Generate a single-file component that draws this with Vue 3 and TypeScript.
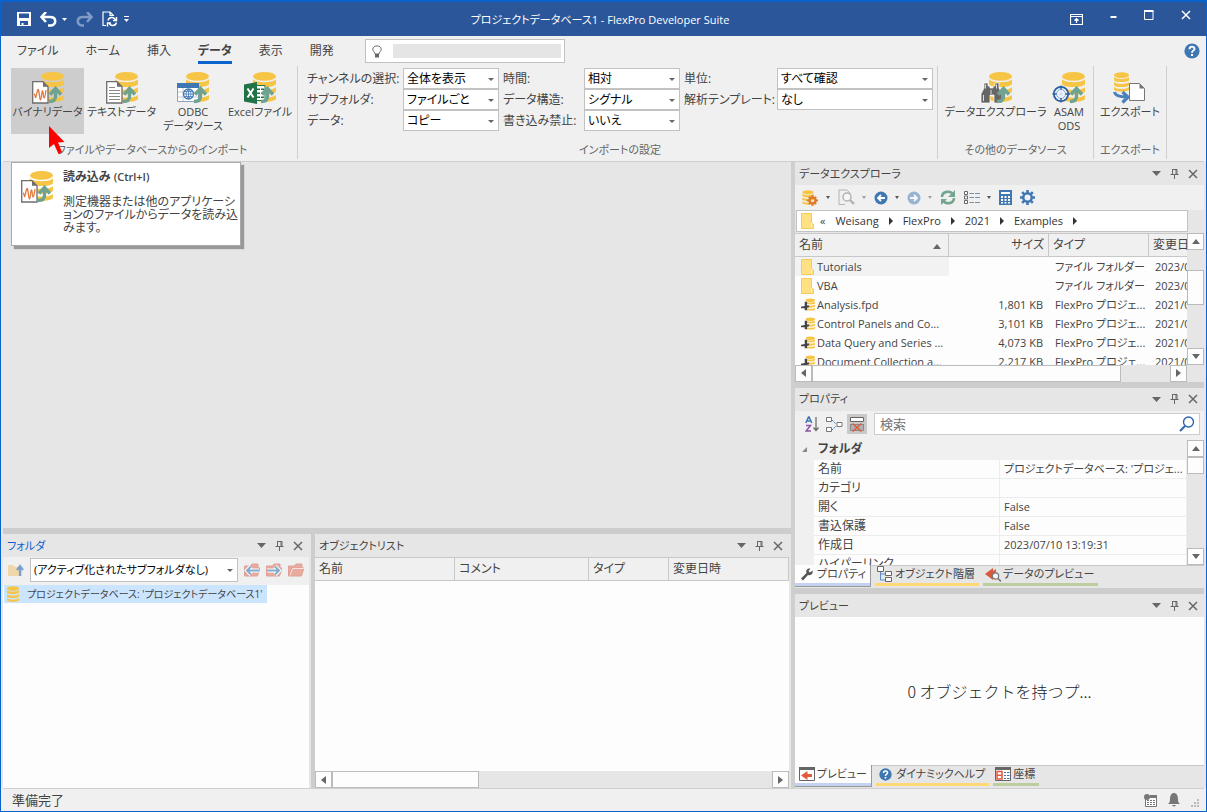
<script setup lang="ts">
import { ref } from 'vue'

interface RibbonButton { kind: string; lines: string[]; active?: boolean }
interface Setting { id: string; label: string; value: string }
interface FileRow { folder: boolean; name: string; size: string; type: string; date: string }
interface DockTab { icon: string; label: string; tone: string }

const menu = ['ファイル', 'ホーム', '挿入', 'データ', '表示', '開発']
const activeMenu = ref('データ')

const importButtons: RibbonButton[] = [
  { kind: 'wave', lines: ['バイナリデータ'], active: true },
  { kind: 'text', lines: ['テキストデータ'] },
  { kind: 'odbc', lines: ['ODBC', 'データソース'] },
  { kind: 'excel', lines: ['Excelファイル'] },
]
const sourceButtons: RibbonButton[] = [
  { kind: 'search', lines: ['データエクスプローラ'] },
  { kind: 'asam', lines: ['ASAM', 'ODS'] },
]
const exportButtons: RibbonButton[] = [{ kind: 'export', lines: ['エクスポート'] }]

const settings: Setting[][] = [
  [
    { id: 'channel', label: 'チャンネルの選択:', value: '全体を表示' },
    { id: 'subfolder', label: 'サブフォルダ:', value: 'ファイルごと' },
    { id: 'data', label: 'データ:', value: 'コピー' },
  ],
  [
    { id: 'time', label: '時間:', value: '相対' },
    { id: 'structure', label: 'データ構造:', value: 'シグナル' },
    { id: 'readonly', label: '書き込み禁止:', value: 'いいえ' },
  ],
  [
    { id: 'unit', label: '単位:', value: 'すべて確認' },
    { id: 'template', label: '解析テンプレート:', value: 'なし' },
  ],
]

const crumbs = ['Weisang', 'FlexPro', '2021', 'Examples']

const files: FileRow[] = [
  { folder: true, name: 'Tutorials', size: '', type: 'ファイル フォルダー', date: '2023/07/10' },
  { folder: true, name: 'VBA', size: '', type: 'ファイル フォルダー', date: '2023/07/10' },
  { folder: false, name: 'Analysis.fpd', size: '1,801 KB', type: 'FlexPro プロジェ...', date: '2021/09/02' },
  { folder: false, name: 'Control Panels and Co...', size: '3,101 KB', type: 'FlexPro プロジェ...', date: '2021/09/02' },
  { folder: false, name: 'Data Query and Series ...', size: '4,073 KB', type: 'FlexPro プロジェ...', date: '2021/09/02' },
  { folder: false, name: 'Document Collection a...', size: '2,217 KB', type: 'FlexPro プロジェ...', date: '2021/09/02' },
]

const properties: [string, string][] = [
  ['名前', "プロジェクトデータベース: 'プロジェ..."],
  ['カテゴリ', ''],
  ['開く', 'False'],
  ['書込保護', 'False'],
  ['作成日', '2023/07/10 13:19:31'],
  ['ハイパーリンク', ''],
]

const propertyTabs: DockTab[] = [
  { icon: 'wrench', label: 'プロパティ', tone: 'blue' },
  { icon: 'tree', label: 'オブジェクト階層', tone: 'yellow' },
  { icon: 'lens', label: 'データのプレビュー', tone: 'green' },
]
const previewTabs: DockTab[] = [
  { icon: 'preview', label: 'プレビュー', tone: 'blue' },
  { icon: 'help', label: 'ダイナミックヘルプ', tone: 'yellow' },
  { icon: 'coords', label: '座標', tone: 'green' },
]
const listColumns = ['名前', 'コメント', 'タイプ', '変更日時']
const query = ref('')
const command = ref('')
</script>

<template>
  <div class="window">
    <svg class="defs" aria-hidden="true">
      <symbol id="db" viewBox="0 0 24 32">
        <g fill="#f7c545">
          <ellipse cx="12" cy="5" rx="12" ry="4.6" />
          <path d="M0 8c3 4 21 4 24 0v5c-3 4-21 4-24 0z" />
          <path d="M0 16c3 4 21 4 24 0v5c-3 4-21 4-24 0z" />
          <path d="M0 24c3 4 21 4 24 0v4.500c-3 4-21 4-24 0z" />
        </g>
      </symbol>
      <symbol id="up-arrow" viewBox="0 0 14 18">
        <path d="M2 8.500 7.500 2.500 13 8.500M7.500 4v6.500q0 5-6.500 5" fill="none" stroke="#6fa391" stroke-width="3.400" />
      </symbol>
      <symbol id="sheet" viewBox="0 0 17 23">
        <path d="M.7.700h10.300l5 5v16.300H.7z" fill="#fff" stroke="#6e6e6e" stroke-width="1.300" />
        <path d="M11 .700v5h5z" fill="#6e6e6e" />
      </symbol>
      <symbol id="wave-db" viewBox="0 0 34 34">
        <use href="#db" x="10" y="1" width="23" height="32" />
        <use href="#sheet" x="1" y="11" width="17" height="23" />
        <path d="M3 24c1 0 1 2 1.500 3.500S6.500 17 7.500 20s1 10 2 10 1-9 2-9 .5 7 1.500 7 1.500-5 2-8" fill="none" stroke="#e2793d" stroke-width="1.300" />
        <use href="#up-arrow" x="17" y="16" width="14" height="18" />
      </symbol>
      <symbol id="caret" viewBox="0 0 9 5"><path d="M0 0h9L4.500 5z" fill="#666" /></symbol>
      <symbol id="pin" viewBox="0 0 9 10">
        <path d="M2 .5h5M2.500.500v5M6 .500v5M7 .500v5M.5 5.500h8M4.500 6v4" fill="none" stroke="#666" />
      </symbol>
      <symbol id="close" viewBox="0 0 10 10"><path d="m1 1 8 8M9 1 1 9" stroke="#666" stroke-width="1.500" /></symbol>
      <symbol id="folder" viewBox="0 0 14 16">
        <path d="M.5.500h10v10l2 .5v4.500H.5z" fill="#ffe083" stroke="#f3cd58" />
        <path d="M10.500 10v5" stroke="#fff1b8" />
      </symbol>
      <symbol id="project" viewBox="0 0 15 15">
        <use href="#db" x="5" y="0" width="10" height="14" />
        <path d="M4 4h2.500v4H9l-1 2.500H6.500V13H4v-2H0V9.500l4-1z" fill="#444" />
      </symbol>
      <symbol id="help" viewBox="0 0 16 16">
        <circle cx="8" cy="8" r="7.600" fill="#3f77b3" />
        <path d="M5.500 6.200c0-3.400 5-3.400 5-.3C10.500 7.700 8 7.500 8 9.800" fill="none" stroke="#fff" stroke-width="1.900" />
        <path d="M7 11h2v2H7z" fill="#fff" />
      </symbol>
    </svg>

    <header class="titlebar">
      <div class="quick">
        <button aria-label="保存"><svg width="14" height="14"><path d="M0 0h14v14H0z" fill="#fff" /><path d="M2 1.500h10v4.500H2zM3 9h8v4H6.500v-2h-2v2H3z" fill="#2b579a" /></svg></button>
        <button aria-label="元に戻す"><svg width="17" height="15"><path d="M6 0 1.500 5 6 10M2 5h8c7 0 6.500 8 1 8.500H8" fill="none" stroke="#fff" stroke-width="2.600" /></svg></button>
        <button class="tiny" aria-label="元に戻す履歴"><svg width="5" height="3"><path d="M0 0h5L2.500 3z" fill="#fff" /></svg></button>
        <button aria-label="やり直し"><svg width="17" height="15"><path d="m11 0 4.500 5L11 10M15 5H7C0 5 .5 13 6 13.500h2" fill="none" stroke="#7f9bc6" stroke-width="2.600" /></svg></button>
        <button aria-label="更新"><svg width="16" height="16"><path d="M4 14.500H1V1h7l3.500 3.500V5M8 1v3.500h3.500" fill="none" stroke="#fff" stroke-width="1.200" /><path d="M6 9.500c1-4 6-4 7.500-.5M14.500 11.500c-1 4-6 4-7.500.5M14.500 6v3.500H11M5.500 15.500V12H9" fill="none" stroke="#fff" stroke-width="1.400" /></svg></button>
        <button class="tiny" aria-label="カスタマイズ"><svg width="7" height="7"><path d="M1 .500h5" stroke="#fff" /><path d="M1 3h5L3.500 6z" fill="#fff" /></svg></button>
      </div>
      <h1>プロジェクトデータベース1 - FlexPro Developer Suite</h1>
      <div class="system">
        <button aria-label="リボン表示"><svg width="13" height="11"><path d="M.5.500h12v10H.5zM.5 2.500h12M6.500 9V4.500M4.500 6.500l2-2 2 2" fill="none" stroke="#fff" stroke-width="1.200" /></svg></button>
        <button aria-label="最小化"><svg width="7" height="11"><path d="M.5 7h6" stroke="#fff" stroke-width="2" /></svg></button>
        <button aria-label="最大化"><svg width="10" height="11"><path d="M.5 1h8.500v8.500H.5z" fill="none" stroke="#fff" /><path d="M0 1h9.500" stroke="#fff" stroke-width="2" /></svg></button>
        <button aria-label="閉じる"><svg width="10" height="10"><path d="m1 1 8 8M9 1 1 9" stroke="#fff" stroke-width="1.500" /></svg></button>
      </div>
    </header>

    <section class="ribbon">
      <nav class="menu">
        <button v-for="m in menu" :key="m" :class="{ current: m === activeMenu }" @click="activeMenu = m">{{ m }}</button>
        <label class="tell">
          <svg width="10" height="13"><path d="M3 9C3 7 .8 6.500.8 4.300.800-.2 9.200-.2 9.200 4.300 9.200 6.500 7 7 7 9z" fill="#fff" stroke="#666" /><path d="M3 9h4v3.500H3z" fill="#666" /></svg>
          <input v-model="command" aria-label="操作アシスト" />
        </label>
        <button class="help" aria-label="ヘルプ"><svg width="16" height="16"><use href="#help" /></svg></button>
      </nav>

      <div class="groups">
        <template v-for="(g, gi) in [importButtons, null, sourceButtons, exportButtons]" :key="gi">
          <section v-if="g" class="group" :class="'g' + gi">
            <div class="bigs">
              <button v-for="b in g" :key="b.kind" class="big" :class="[b.kind, { pressed: b.active }]">
                <svg width="34" height="34" viewBox="0 0 34 34">
                  <use v-if="b.kind === 'wave'" href="#wave-db" />
                  <template v-else-if="b.kind !== 'export'">
                    <use href="#db" x="10" y="1" width="23" height="32" />
                    <template v-if="b.kind === 'text'">
                      <use href="#sheet" x="1" y="11" width="17" height="23" />
                      <path d="M4 17.500h6M4 20.500h11M4 23.500h11M4 26.500h11M4 29.500h11" stroke="#888" />
                    </template>
                    <template v-if="b.kind === 'odbc'">
                      <path d="M1.500 13.500h21v18h-21z" fill="#fff" stroke="#8aa2bd" />
                      <path d="M1 13h22v5H1z" fill="#3f77b3" />
                      <path d="M2 22h20M2 27h20M7 18v13" stroke="#c5ccd5" />
                      <circle cx="12.500" cy="24" r="5" fill="#fff" stroke="#3f77b3" stroke-width="1.300" />
                      <path d="M7.500 24h10M12.500 19v10M8.500 21.500h8M8.500 26.500h8M12.500 19q-5 5 0 10q5-5 0-10" fill="none" stroke="#3f77b3" stroke-width=".8" />
                    </template>
                    <template v-if="b.kind === 'excel'">
                      <path d="M12 15.500h10v15H12z" fill="#fff" stroke="#217346" />
                      <path d="M14 18.500h3v1.500h-3zm4 0h3v1.500h-3zm-4 4h3v1.500h-3zm4 0h3v1.500h-3zm-4 4h3v1.500h-3zm4 0h3v1.500h-3z" fill="#217346" />
                      <path d="m1 14.500 13-2.500v22L1 31.500z" fill="#217346" />
                      <path d="m4.500 18.500 6 9M10.500 18.500l-6 9" stroke="#fff" stroke-width="2" />
                    </template>
                    <template v-if="b.kind === 'search'">
                      <path d="M5 13h4v3h2v2h3v-2h2v-3h4v5l3 6v9h-8v-8h-4v8H2v-9l3-6z" fill="#666" stroke="#fff" stroke-width=".7" />
                      <path d="M4.500 25v6M6.500 14.500v4M17.500 14.500v4M12 20v4" stroke="#ddd" />
                    </template>
                    <template v-if="b.kind === 'asam'">
                      <circle cx="9" cy="24" r="7.200" fill="#edf3fa" stroke="#2d5e9e" stroke-width="1.800" />
                      <circle cx="9" cy="24" r="4.500" fill="#fff" stroke="#82a9d2" stroke-width="1" />
                      <path d="M9 15.500v4M9 28v4.500M.5 24h4M13.500 24H18" stroke="#2d5e9e" stroke-width="1.400" />
                      <path d="M9 20v8M5 24h8M6 21l6 6M12 21l-6 6" stroke="#c7d8ea" stroke-width=".8" />
                    </template>
                    <use href="#up-arrow" x="17" y="16" width="14" height="18" />
                  </template>
                  <template v-else>
                    <use href="#db" x="1" y="2" width="15" height="20" />
                    <path d="M16.500 13.500h10l5 5v12h-15z" fill="#fff" stroke="#777" />
                    <path d="M26.500 13.500v5h5z" fill="#777" />
                    <path d="M1.500 22q1 5 12 5M9.500 22l5.500 5-5.500 5.500" fill="none" stroke="#4b80bd" stroke-width="3.200" />
                  </template>
                </svg>
                <span v-for="l in b.lines" :key="l">{{ l }}</span>
              </button>
            </div>
            <h2>{{ ['ファイルやデータベースからのインポート', '', 'その他のデータソース', 'エクスポート'][gi] }}</h2>
          </section>
          <section v-else class="group settings">
            <div class="columns">
              <div v-for="(col, ci) in settings" :key="ci" class="fields">
                <template v-for="s in col" :key="s.id">
                  <label :for="s.id">{{ s.label }}</label>
                  <span class="select"><select :id="s.id"><option>{{ s.value }}</option></select></span>
                </template>
              </div>
            </div>
            <h2>インポートの設定</h2>
          </section>
        </template>
      </div>

      <svg class="pointer" width="18" height="30"><path d="M1 0v22l5-4 4.500 10 3.500-2-4-9.500 6.500-.5z" fill="#f00" /></svg>
      <aside class="tip" role="tooltip">
        <svg width="34" height="34"><use href="#wave-db" /></svg>
        <div>
          <strong>読み込み <small>(Ctrl+I)</small></strong>
          <p>測定機器または他のアプリケーションのファイルからデータを読み込みます。</p>
        </div>
      </aside>
    </section>

    <main class="workspace">
      <div class="left">
        <div class="canvas"></div>
        <div class="dock">
          <section class="panel tree">
            <header class="bar focus">
              <h2>フォルダ</h2>
              <button aria-label="メニュー"><svg width="9" height="5"><use href="#caret" /></svg></button>
              <button aria-label="固定"><svg width="9" height="10"><use href="#pin" /></svg></button>
              <button aria-label="閉じる"><svg width="10" height="10"><use href="#close" /></svg></button>
            </header>
            <div class="tree-tools">
              <button aria-label="上へ"><svg width="16" height="14"><path d="M0 2h5l2 2h7v9H0z" fill="#f0d7ab" /><path d="M12 13V5M9 7l3-4 3 4" fill="none" stroke="#7ba1cb" stroke-width="2.200" /></svg></button>
              <span class="select"><select aria-label="サブフォルダ"><option>(アクティブ化されたサブフォルダなし)</option></select></span>
              <button v-for="n in 3" :key="n" :aria-label="['前のフォルダ', '次のフォルダ', 'フォルダを開く'][n - 1]">
                <svg width="16" height="14">
                  <path d="M.5 13V3h6l1.500-2h6v4M.5 13l3-8h12.500l-2.500 8z" fill="#e9aaa0" stroke="#dfa096" />
                  <path v-if="n === 3" d="M2 12.500 4.500 5.500H16" fill="none" stroke="#f7dfdb" />
                  <path v-if="n === 1" d="M15 7.500H3M7 3.500l-4 4 4 4" fill="none" stroke="#fff" stroke-width="4" />
                  <path v-if="n === 1" d="M15 7.500H3M7 3.500l-4 4 4 4" fill="none" stroke="#81acd0" stroke-width="2" />
                  <path v-if="n === 2" d="M1 7.500h12M9 3.500l4 4-4 4" fill="none" stroke="#fff" stroke-width="4" />
                  <path v-if="n === 2" d="M1 7.500h12M9 3.500l4 4-4 4" fill="none" stroke="#81acd0" stroke-width="2" />
                </svg>
              </button>
            </div>
            <div class="tree-body">
              <button class="node"><svg width="12" height="16"><use href="#db" /></svg>プロジェクトデータベース: 'プロジェクトデータベース1'</button>
            </div>
          </section>
          <section class="panel objects">
            <header class="bar">
              <h2>オブジェクトリスト</h2>
              <button aria-label="メニュー"><svg width="9" height="5"><use href="#caret" /></svg></button>
              <button aria-label="固定"><svg width="9" height="10"><use href="#pin" /></svg></button>
              <button aria-label="閉じる"><svg width="10" height="10"><use href="#close" /></svg></button>
            </header>
            <div class="object-body">
              <table>
                <thead><tr><th v-for="c in listColumns" :key="c">{{ c }}</th></tr></thead>
              </table>
            </div>
            <div class="scroll h">
              <button class="prev" aria-label="左へ"></button><i class="thumb"></i><i class="rest"></i><button class="next" aria-label="右へ"></button>
            </div>
          </section>
        </div>
      </div>

      <div class="right">
        <section class="panel explorer">
          <header class="bar">
            <h2>データエクスプローラ</h2>
            <button aria-label="メニュー"><svg width="9" height="5"><use href="#caret" /></svg></button>
            <button aria-label="固定"><svg width="9" height="10"><use href="#pin" /></svg></button>
            <button aria-label="閉じる"><svg width="10" height="10"><use href="#close" /></svg></button>
          </header>
          <div class="tools">
            <button aria-label="データベース設定"><svg width="18" height="16"><use href="#db" x="1" y="0" width="12" height="15" /><circle cx="11.500" cy="10.500" r="3" fill="none" stroke="#e07b28" stroke-width="2.400" /><path d="M11.500 5v2m0 7v2m-5.500-5.500h2m7 0h2M7.800 6.800l1.500 1.500m4.400 4.400 1.500 1.500m0-7.400-1.500 1.500m-4.400 4.400-1.500 1.500" stroke="#e07b28" stroke-width="1.800" /></svg><i class="drop"></i></button>
            <button class="off" aria-label="プレビュー"><svg width="17" height="17"><path d="M12 5V4L9 1H1v14.500h6" fill="none" stroke="#777" /><circle cx="9" cy="8" r="4" fill="#fff" stroke="#777" stroke-width="1.500" /><path d="m12 11 4 4" stroke="#777" stroke-width="2.400" /></svg><i class="drop"></i></button>
            <button aria-label="戻る"><svg width="14" height="14"><circle cx="7" cy="7" r="6.500" fill="#3f77b3" /><path d="M11 7H4m3-3L4 7l3 3" fill="none" stroke="#fff" stroke-width="1.800" /></svg><i class="drop"></i></button>
            <button class="off" aria-label="進む"><svg width="14" height="14"><circle cx="7" cy="7" r="6.500" fill="#3f77b3" /><path d="M3 7h7M7 4l3 3-3 3" fill="none" stroke="#fff" stroke-width="1.800" /></svg><i class="drop"></i></button>
            <button aria-label="更新"><svg width="16" height="16"><path d="M2 7c0-6 9-7 11-2M14 8c0 6-9 7-11 2" fill="none" stroke="#72a68f" stroke-width="2.600" /><path d="M15 0v7H8zM1 15V9h6z" fill="#72a68f" /></svg></button>
            <button aria-label="表示"><svg width="16" height="14"><path d="M.5.500h3v3h-3zm0 4.500h3v3h-3zm0 4.500h3v3h-3z" fill="#fff" stroke="#666" /><path d="M5.500 2.500h4.500M11 2.500h5M5.500 6.500h4.500M11 6.500h5M5.500 11.500h4.500M11 11.500h5" stroke="#7790a8" /></svg><i class="drop"></i></button>
            <button aria-label="計算"><svg width="13" height="15"><path d="M0 0h13v15H0z" fill="#3f77b3" /><path d="M2 2h9v2H2zM2 6h2v2H2zm3.500 0h2v2h-2zM9 6h2v2H9zM2 9h2v2H2zm3.500 0h2v2h-2zM9 9h2v2H9zM2 12h2v1.500H2zm3.500 0h2v1.500h-2zM9 12h2v1.500H9z" fill="#fff" /></svg></button>
            <button aria-label="設定"><svg width="15" height="15"><circle cx="7.500" cy="7.500" r="4.200" fill="none" stroke="#3f77b3" stroke-width="2.400" /><path d="M7.500 0v3m0 9v3M0 7.500h3m9 0h3M2.200 2.200l2 2m6.600 6.600 2 2m0-10.600-2 2m-6.600 6.600-2 2" stroke="#3f77b3" stroke-width="2.600" /></svg></button>
          </div>
          <nav class="crumbs" aria-label="パス">
            <svg width="14" height="16"><use href="#folder" /></svg><span>«</span>
            <a v-for="c in crumbs" :key="c" href="#">{{ c }}</a>
          </nav>
          <div class="files">
            <div class="clip">
              <table>
                <colgroup><col class="c-name" /><col class="c-size" /><col class="c-type" /><col class="c-date" /></colgroup>
                <thead><tr><th class="sorted">名前</th><th class="num">サイズ</th><th>タイプ</th><th>変更日時</th></tr></thead>
                <tbody>
                  <tr v-for="(f, i) in files" :key="f.name">
                    <td :class="{ hot: i === 0 }"><span class="file"><svg width="14" height="16"><use :href="f.folder ? '#folder' : '#project'" /></svg>{{ f.name }}</span></td>
                    <td class="num">{{ f.size }}</td><td>{{ f.type }}</td><td>{{ f.date }}</td>
                  </tr>
                </tbody>
              </table>
            </div>
            <div class="scroll v">
              <button class="up" aria-label="上へ"></button><i class="lead"></i><i class="thumb"></i><i class="rest"></i><button class="down" aria-label="下へ"></button>
            </div>
            <div class="scroll h">
              <button class="prev" aria-label="左へ"></button><i class="thumb"></i><i class="rest"></i><button class="next" aria-label="右へ"></button>
            </div>
          </div>
        </section>

        <section class="panel props">
          <header class="bar">
            <h2>プロパティ</h2>
            <button aria-label="メニュー"><svg width="9" height="5"><use href="#caret" /></svg></button>
            <button aria-label="固定"><svg width="9" height="10"><use href="#pin" /></svg></button>
            <button aria-label="閉じる"><svg width="10" height="10"><use href="#close" /></svg></button>
          </header>
          <div class="prop-tools">
            <button aria-label="名前順"><svg width="14" height="16"><path d="m.8 7 2.700-6h.6l2.700 6M2 5h3.700" fill="none" stroke="#3f77b3" stroke-width="1.500" /><path d="M1 9.500h4.500L1.200 15H6" fill="none" stroke="#8c57a8" stroke-width="1.500" /><path d="M11 1v13M8.500 11.500 11 14.500l2.500-3" fill="none" stroke="#666" stroke-width="1.200" /></svg></button>
            <button aria-label="分類"><svg width="17" height="15"><path d="M.5.500h5v4h-5zM.5 10.500h5v4h-5zM11 5.500h5v4h-5z" fill="#fff" stroke="#777" /><path d="m6 3 4 4M6 13l4-4" stroke="#3f77b3" stroke-dasharray="2 1" /></svg></button>
            <button class="on" aria-label="非表示"><svg width="14" height="15"><path d="M.5.500h13v4H.5z" fill="#fff" stroke="#666" /><path d="M.5 7v6.500h13V7M1 7.500h12" fill="#b0b0b0" stroke="#888" /><path d="m2.500 6.500 9 8M11.500 6.500l-9 8" stroke="#e25a3c" stroke-width="1.500" /></svg></button>
            <label class="find">
              <input v-model="query" type="text" placeholder="検索" aria-label="検索" />
              <svg width="16" height="16"><circle cx="9.500" cy="6" r="5" fill="none" stroke="#2f65ac" stroke-width="1.400" /><path d="m6 10-5 5" stroke="#2f65ac" stroke-width="2" /></svg>
            </label>
          </div>
          <div class="grid">
            <div class="clip">
              <table>
                <colgroup><col class="c-gutter" /><col class="c-key" /><col /></colgroup>
                <tbody>
                  <tr class="cat"><td class="gutter"></td><th colspan="2">フォルダ</th></tr>
                  <tr v-for="p in properties" :key="p[0]"><td class="gutter"></td><th>{{ p[0] }}</th><td>{{ p[1] }}</td></tr>
                </tbody>
              </table>
            </div>
            <div class="scroll v">
              <button class="up" aria-label="上へ"></button><i class="thumb"></i><i class="rest"></i><button class="down" aria-label="下へ"></button>
            </div>
          </div>
        </section>

        <section class="panel preview">
          <header class="bar">
            <h2>プレビュー</h2>
            <button aria-label="メニュー"><svg width="9" height="5"><use href="#caret" /></svg></button>
            <button aria-label="固定"><svg width="9" height="10"><use href="#pin" /></svg></button>
            <button aria-label="閉じる"><svg width="10" height="10"><use href="#close" /></svg></button>
          </header>
          <div class="message">0 オブジェクトを持つプ...</div>
        </section>

        <div v-for="(set, si) in [propertyTabs, previewTabs]" :key="si" class="tabs" :class="'t' + si">
          <button v-for="t in set" :key="t.label" :class="t.tone">
            <svg width="16" height="16">
              <path v-if="t.icon === 'wrench'" d="M2 12.500 7.500 7C6.500 4 8.500 2 11.500 2.500L9.500 5l1.500 1.500 2.500-2C14.500 7.500 12 10 9 9l-5 5.500z" fill="#555" />
              <g v-if="t.icon === 'tree'" fill="#fff" stroke="#666"><path d="M3.500 6v8h5M3.500 8h5" fill="none" stroke="#5d8bc0" /><path d="M.5.500h6v5h-6zM8.500 5.500h6v4h-6zM8.500 11.500h6v4h-6z" /></g>
              <g v-if="t.icon === 'lens'"><path d="M0 8 8 2v3l3-2v9l-3-1v3z" fill="#d9583c" /><circle cx="10.500" cy="10" r="3.200" fill="#f3f3f3" stroke="#777" stroke-width="1.200" /><path d="m13 12.500 3 3" stroke="#777" stroke-width="1.600" /></g>
              <g v-if="t.icon === 'preview'"><path d="M.5 1.500h15v13H.5z" fill="#fff" stroke="#666" /><path d="M0 1h16v3H0z" fill="#666" /><path d="M2 9.500 8.500 5v3H13v3H8.500v3z" fill="#e25a3c" /></g>
              <use v-if="t.icon === 'help'" href="#help" x="1" y="2" width="13" height="13" />
              <g v-if="t.icon === 'coords'"><path d="M.5 1.500h15v13H.5z" fill="#fff" stroke="#666" /><path d="M0 1h16v3H0z" fill="#666" /><path d="M2 5.500h5v7.500H2zM2 9.200h5" fill="none" stroke="#e25a3c" stroke-width="1.500" /><path d="M9 6.500h2m1 0h2.500M9 9.500h2m1 0h2.500M9 12.500h2m1 0h2.500" stroke="#3f77b3" /></g>
            </svg>
            {{ t.label }}
          </button>
        </div>
      </div>
    </main>

    <footer class="status">
      <span>準備完了</span>
      <svg width="13" height="13"><path d="M1.500 4v8.500h11v-11H6" fill="#fff" stroke="#777" /><circle cx="3" cy="3" r="3" fill="#777" /><path d="M6 1h7v3H6z" fill="#777" /><path d="M3 6.500h2m1 0h2m1 0h2M3 8.500h2m1 0h2m1 0h2M3 10.500h2m1 0h2m1 0h2" stroke="#777" /></svg>
      <svg width="12" height="14"><path d="M0 11q2-1 2-5c0-8 8-8 8 0q0 4 2 5z" fill="#777" /><path d="M4 12h4q-2 3-4 0z" fill="#777" /></svg>
      <svg class="grip" width="8" height="8"><path d="M6 0h2v2H6zM3 3h2v2H3zM6 3h2v2H6zM0 6h2v2H0zM3 6h2v2H3zM6 6h2v2H6z" fill="#bbb" /></svg>
    </footer>
  </div>
</template>

<style>
html, body { margin: 0; height: 100%; }
</style>

<style scoped>
* { box-sizing: border-box; }
.window {
  position: relative; display: flex; flex-direction: column; height: 100vh; overflow: hidden;
  border: solid #0a63cc; border-width: 2px 1px 1px; background: #f0f0f0; color: #444;
  font: 12px/18px "Open Sans", "Noto Sans CJK JP", sans-serif; font-feature-settings: "palt";
}
.defs { position: absolute; width: 0; height: 0; }
button { display: flex; align-items: center; justify-content: center; border: 0; padding: 0; background: none; color: inherit; font: inherit; font-feature-settings: inherit; }
svg { flex: none; display: block; }
h1, h2 { margin: 0; font: inherit; font-size: 11px; white-space: nowrap; }
input, select { font: inherit; font-feature-settings: inherit; color: inherit; min-width: 0; }
table { border-collapse: separate; border-spacing: 0; table-layout: fixed; }
th, td { padding: 0; font-weight: 400; text-align: left; white-space: nowrap; overflow: hidden; }

.titlebar { flex: none; display: grid; grid-template-columns: 1fr auto 1fr; align-items: center; height: 34px; padding: 0 15px 0 16px; background: #2b579a; color: #fff; }
.titlebar h1 { padding: 2px 8px 0 0; }
.quick { display: flex; align-items: center; gap: 9px; }
.quick .tiny { margin: 0 0 0 -4px; }
.system { display: flex; align-items: flex-start; justify-content: flex-end; gap: 27px; height: 18px; }
.system button:first-child { margin: 4px 0 0; }

.ribbon { position: relative; z-index: 2; flex: none; margin: 0 2px; border-bottom: 1px solid #cfcfcf; }
.menu { display: flex; align-items: center; height: 30px; padding-left: 14px; gap: 27px; }
.menu > button { height: 25px; padding-top: 3px; border-bottom: 3px solid transparent; }
.menu .current { font-weight: 700; border-color: #0a63cc; }
.tell { display: flex; align-items: center; width: 200px; height: 24px; margin-left: 4px; padding: 0 3px 0 6px; gap: 11px; border: 1px solid #c2c2c2; background: #fff; }
.tell input { flex: 1; height: 14px; border: 0; background: #e5e5e5; }
.menu .help { margin: 0 4px 0 auto; padding: 0; border: 0; }

.groups { display: flex; height: 95px; padding: 0 0 2px 4px; }
.group { flex: none; display: flex; flex-direction: column; justify-content: space-between; border-right: 1px solid #cfcfcf; padding: 2px 4px 0; }
.group h2 { text-align: center; color: #666; }
.g0 { width: 291px; }
.g2 { width: 156px; }
.g3 { width: 73px; padding: 2px 0 0; }
.bigs { display: flex; }
.big { flex-direction: column; justify-content: flex-start; height: 66px; padding-top: 2px; font-size: 11px; line-height: 13px; white-space: nowrap; }
.big span:first-of-type { line-height: 15px; }
.pressed { background: #cdcdcd; }
.wave { width: 73px; }
.text { width: 75px; }
.odbc { width: 68px; }
.excel { width: 66px; }
.search { width: 107px; }
.asam { width: 40px; }
.export { width: 74px; }
.settings { width: 640px; padding-left: 9px; }
.columns { display: flex; gap: 4px; }
.fields { display: grid; grid-template-columns: 96px 96px; grid-auto-rows: 21px; align-items: center; align-content: start; white-space: nowrap; }
.fields:nth-child(2) { grid-template-columns: 81px 96px; }
.fields:nth-child(3) { flex: 1; grid-template-columns: 93px 1fr; }
.select { position: relative; display: block; height: 21px; }
.select select { width: 100%; height: 100%; padding: 0 14px 0 3px; border: 1px solid #c2c2c2; border-radius: 0; background: #fff; color: #000; appearance: none; }
.select::after { content: ""; position: absolute; right: 5px; top: 50%; margin-top: -1px; border: solid transparent; border-width: 3px 3px 0; border-top-color: #666; pointer-events: none; }

.pointer { position: absolute; left: 45px; top: 90px; z-index: 3; }
.tip { position: absolute; left: 8px; top: 126px; display: flex; gap: 9px; width: 230px; min-height: 84px; padding: 6px 1px 6px 8px; border: 1px solid #aaa; background: #fff; box-shadow: 3px 3px 1px #999; }
.tip strong { display: block; line-height: 15px; }
.tip small { font-size: 11px; font-weight: 600; }
.tip p { margin: 11px 0 0; line-height: 13px; line-break: anywhere; }

.workspace { flex: 1; min-height: 0; display: flex; padding: 0 2px; background: #e6e6e6; }
.left { flex: 788; min-width: 0; display: flex; flex-direction: column; }
.canvas { flex: 366; border-bottom: 6px solid #cdcdcd; }
.dock { flex: 254; min-height: 0; display: flex; }
.tree { flex: 306; border-right: 2px solid #e6e6e6; }
.objects { flex: 474; margin-right: 2px; border-left: 4px solid #cdcdcd; }
.panel { min-width: 0; min-height: 0; display: flex; flex-direction: column; }
.bar { flex: none; display: flex; align-items: center; gap: 9px; height: 23px; padding: 0 6px 0 4px; background: #e6e6e6; }
.bar h2 { flex: 1; }
.focus { color: #0a5fcf; }
.tree-tools { flex: none; display: flex; align-items: center; gap: 6px; height: 28px; padding: 0 5px 2px; }
.tree-tools, .tools, .prop-tools { background: #f0f0f0; }
.tree-tools .select { flex: 1; min-width: 0; height: 24px; }
.tree-tools select { font-size: 11px; }
.tree-body, .object-body { flex: 1; min-height: 0; background: #fdfdfd; }
.node { height: 18px; gap: 8px; padding: 0 4px 0 3px; margin-left: 1px; background: #cce5ff; font-size: 10px; white-space: nowrap; }
.objects table { width: 100%; }
.objects th { height: 24px; padding-left: 4px; border: solid #c8c8c8; border-width: 1px 1px 1px 0; background: #f0f0f0; }
.objects th:nth-child(1) { width: 140px; }
.objects th:nth-child(2) { width: 134px; }
.objects th:nth-child(3) { width: 80px; }

.right { flex: 409; min-width: 0; display: grid; grid-template-rows: 226fr 178fr 29px 171fr 23px; border-left: 4px solid #cfcfcf; }
.right .explorer { grid-row: 1; border-bottom: 6px solid #cdcdcd; }
.right .props { grid-row: 2; }
.t0 { grid-row: 3; border-bottom: 6px solid #cdcdcd; }
.preview { grid-row: 4; }
.t1 { grid-row: 5; }
.tools { flex: none; display: flex; align-items: center; height: 25px; padding-left: 6px; gap: 8px; }
.tools button { gap: 7px; }
.tools .off { opacity: .5; }
.drop { border: solid transparent; border-width: 3px 2px 0; border-top-color: #555; }
.crumbs { flex: none; display: flex; align-items: center; height: 22px; margin: 0 16px 1px 1px; padding-left: 4px; border: 1px solid #c2c2c2; background: #fff; gap: 5px; font-size: 11px; }
.crumbs a { display: flex; align-items: center; gap: 10px; margin-left: 5px; color: #333; text-decoration: none; }
.crumbs a::after { content: ""; border: solid transparent; border-width: 4px 0 4px 4px; border-left-color: #333; }
.files { flex: 1; min-height: 0; display: grid; grid-template: 1fr 17px / 1fr 17px; }
.clip { overflow: hidden; min-width: 0; min-height: 0; background: #fdfdfd; }
.files table { width: 460px; }
.c-name { width: 154px; }
.c-size, .c-type { width: 100px; }
.c-date { width: 106px; }
.files th { position: relative; height: 24px; padding: 0 4px; border: solid #c8c8c8; border-width: 1px 1px 1px 0; background: #f0f0f0; }
.files td { height: 19px; padding: 0 6px; font-size: 11px; line-height: 18px; }
.files .num { text-align: right; }
.file { display: flex; align-items: center; gap: 2px; }
.hot { background: #f2f2f2; }
.sorted::after { content: ""; position: absolute; right: 7px; top: 10px; border: solid transparent; border-width: 0 4px 5px; border-bottom-color: #666; }

.scroll { display: flex; background: #e6e6e6; }
.scroll.h { height: 17px; flex: none; }
.scroll.v { flex-direction: column; }
.scroll button { flex: none; width: 17px; height: 17px; border: 1px solid #bbb; background: #fdfdfd; }
.scroll button::before { content: ""; border: solid transparent; }
.scroll .prev::before { border-width: 4px 5px 4px 0; border-right-color: #666; }
.scroll .next::before { border-width: 4px 0 4px 5px; border-left-color: #666; }
.scroll .up::before { border-width: 0 4px 5px; border-bottom-color: #666; }
.scroll .down::before { border-width: 5px 4px 0; border-top-color: #666; }
.thumb { border: 1px solid #bbb; background: #fdfdfd; }
.objects .thumb { flex: 146; }
.objects .rest { flex: 294; }
.files .h .thumb { flex: 309; }
.files .h .rest { flex: 49; }
.files .lead { flex: 21; }
.files .v .thumb { flex: 34; }
.files .v .rest { flex: 44; }

.prop-tools { flex: none; display: flex; align-items: center; height: 29px; padding: 0 4px 2px 8px; gap: 4px; }
.prop-tools > button { width: 18px; height: 20px; }
.prop-tools .on { width: 20px; background: #c9c9c9; }
.find { flex: 1; display: flex; align-items: center; height: 22px; margin-left: 3px; padding: 0 4px; border: 1px solid #ccc; background: #fff; }
.find input { flex: 1; border: 0; padding: 0 1px; background: none; outline: 0; font-size: 13px; }
.grid { flex: 1; min-height: 0; display: grid; grid-template: 1fr / 1fr 17px; }
.grid table { width: 100%; }
.c-gutter { width: 19px; }
.c-key { width: 186px; }
.grid th, .grid td { height: 19px; padding-left: 4px; border: solid #ececec; border-width: 0 1px 1px 0; line-height: 18px; }
.grid td { font-size: 11px; }
.grid .gutter { background: #f0f0f0; border-color: #f0f0f0; }
.grid .cat th { font-weight: 700; }
.grid .cat > * { height: 20px; background: #f0f0f0; border-color: #f0f0f0; }
.grid .cat .gutter { padding-left: 7px; }
.cat .gutter::before { content: ""; display: block; width: 0; border: solid transparent; border-width: 0 0 5px 5px; border-bottom-color: #888; }
.grid .thumb { height: 17px; }
.grid .rest { flex: 1; }

.tabs { display: flex; gap: 4px; overflow: hidden; background: linear-gradient(#c8c8c8, #c8c8c8) top / 100% 1px no-repeat #e6e6e6; }
.tabs button { height: 21px; gap: 2px; padding: 0 4px 0 2px; border-bottom: 3px solid; font-size: 11px; white-space: nowrap; }
.tabs .blue { height: 22px; padding: 0 4px 3px; background: linear-gradient(#c4d2f0, #c4d2f0) bottom / 100% 3px no-repeat #fdfdfd; border: solid #999; border-width: 0 1px 1px 0; }
.tabs .yellow { border-color: #ffd975; }
.tabs .green { border-color: #bccd9f; }
.message { flex: 1; display: flex; align-items: center; justify-content: center; background: #fdfdfd; color: #222; font: 300 16px/20px "Noto Sans CJK JP", sans-serif; font-feature-settings: normal; }

.status { flex: none; display: flex; align-items: center; gap: 11px; height: 23px; margin: 0 2px; padding: 0 5px 0 9px; border-top: 1px solid #cfcfcf; font-size: 13px; }
.status span { flex: 1; }
.grip { align-self: flex-end; margin-bottom: 4px; }
</style>
